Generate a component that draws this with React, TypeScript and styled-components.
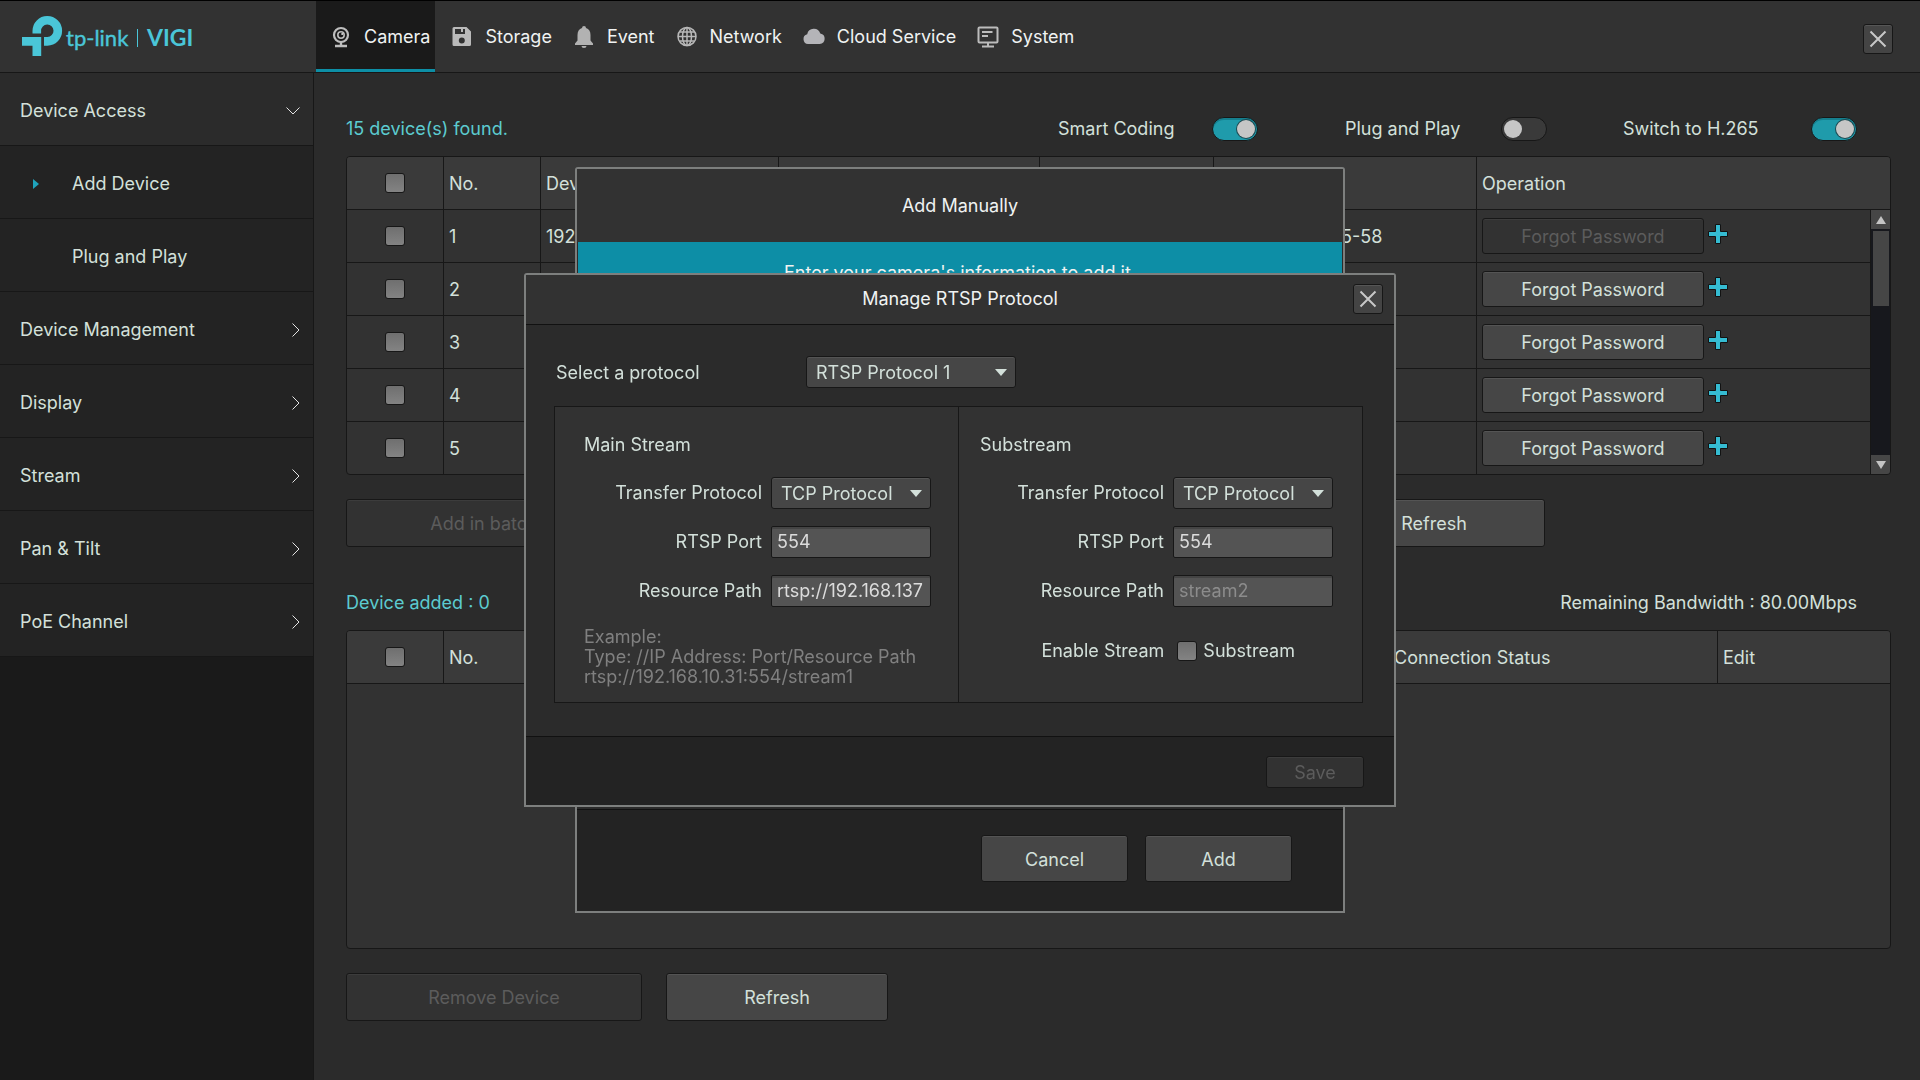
import React from "react";
import styled, { createGlobalStyle, css } from "styled-components";

const c = {
  line: "#171717",
  page: "#2b2b2b",
  panel: "#323232",
  head: "#3a3a3a",
  dark: "#232323",
  darker: "#1a1a1a",
  btn: "#464646",
  text: "#d3e0da",
  white: "#f0f3f2",
  teal: "#0d8fa6",
  tealText: "#5ccbd0",
};

const Global = createGlobalStyle`
  * { box-sizing: border-box; }
  body { margin: 0; background: ${c.page}; }
  body, button, input, select {
    font-family: Inter, "Liberation Sans", sans-serif;
    font-size: 18px;
    line-height: 20px;
    color: ${c.text};
  }
`;

const Page = styled.div`
  min-height: 100vh;
  display: flex;
  flex-direction: column;
  background: ${c.page};
`;

/* ---------- header ---------- */
const Header = styled.header`
  display: flex;
  align-items: stretch;
  height: 73px;
  background: ${c.panel};
  border-top: 1px solid #000;
  border-bottom: 1px solid ${c.line};
`;

const Brand = styled.div`
  flex: none;
  width: 316px;
  padding-left: 22px;
  padding-top: 14px;
`;

const Nav = styled.nav`
  display: flex;
  flex: 1;
  gap: 2px;
`;

const Tab = styled.a<{ $active?: boolean }>`
  display: flex;
  align-items: center;
  gap: 12px;
  height: 71px;
  padding: 3px 5px 0 14px;
  color: ${c.white};
  text-decoration: none;
  border-bottom: 3px solid transparent;
  ${(p) =>
    p.$active &&
    css`
      background: ${c.darker};
      border-bottom-color: ${c.teal};
    `}
`;

const CloseButton = styled.button`
  flex: none;
  display: grid;
  place-items: center;
  width: 30px;
  height: 30px;
  padding: 0;
  border: 1px solid ${c.line};
  border-radius: 3px;
  background: #444;
  box-shadow: inset 0 1px 0 #565656;
`;

const HeaderEnd = styled.div`
  display: flex;
  align-items: center;
  padding: 5px 27px 0 0;
`;

/* ---------- sidebar ---------- */
const Columns = styled.div`
  display: flex;
  flex: 1;
`;

const Sidebar = styled.aside`
  flex: none;
  width: 314px;
  background: ${c.darker};
  border-right: 1px solid ${c.line};
`;

const Menu = styled.ul`
  list-style: none;
  margin: 0;
  padding: 0;
`;

const MenuLink = styled.a<{ $open?: boolean; $sub?: boolean }>`
  display: flex;
  align-items: center;
  justify-content: space-between;
  height: 73px;
  padding: 3px 13px 0 ${(p) => (p.$sub ? 33 : 20)}px;
  ${(p) => p.$sub && "justify-content: flex-start; gap: 31px;"}
  color: ${c.text};
  text-decoration: none;
  background: ${(p) => (p.$open ? c.page : c.dark)};
  border-bottom: 1px solid ${c.line};
`;

const MarkerSlot = styled.span`
  display: flex;
  width: 8px;
`;

/* ---------- main area ---------- */
const Main = styled.main`
  flex: 1;
  min-width: 0;
  padding: 27px 29px 27px 32px;
`;

const StatusBar = styled.div`
  display: flex;
  align-items: center;
  justify-content: space-between;
  height: 56px;
  padding: 2px 34px 0 0;
`;

const Count = styled.span`
  color: ${c.tealText};
`;

const Toggles = styled.div`
  display: grid;
  grid-template-columns: 154px 133px 156px 122px 188px 46px;
  align-items: center;
`;

const Toggle = styled.input`
  appearance: none;
  margin: 0;
  width: 46px;
  height: 24px;
  padding: 2px;
  display: flex;
  border: 1px solid ${c.line};
  border-radius: 12px;
  background: #3a3a3a;
  &::before {
    content: "";
    width: 18px;
    height: 18px;
    border-radius: 50%;
    background: #c6c6c6;
  }
  &:checked {
    background: #1f9bab;
    box-shadow: inset 0 2px 0 #157f8e;
    justify-content: flex-end;
  }
  &:checked::before {
    box-shadow: 0 0 0 1px #1c4a52;
  }
`;

const Check = styled.input`
  appearance: none;
  flex: none;
  display: block;
  width: 20px;
  height: 20px;
  margin: 0;
  border: 1px solid ${c.line};
  border-radius: 3px;
  background: linear-gradient(#6f6f6f, #838383);
`;

const Frame = styled.div<{ $min?: number }>`
  position: relative;
  overflow: hidden;
  border: 1px solid ${c.line};
  border-radius: 4px;
  background: ${c.panel};
  min-height: ${(p) => p.$min ?? 0}px;
`;

const Table = styled.table`
  width: 100%;
  table-layout: fixed;
  border-collapse: separate;
  border-spacing: 0;
`;

const cell = css`
  height: 53px;
  padding: 2px 5px 0;
  text-align: left;
  font-weight: 400;
  white-space: nowrap;
  border-right: 1px solid ${c.line};
  border-bottom: 1px solid ${c.line};
  &:last-child {
    border-right: 0;
  }
`;

const Th = styled.th`
  ${cell}
  background: ${c.head};
`;

const Td = styled.td`
  ${cell}
  tr:last-child > & {
    height: 52px;
    border-bottom: 0;
  }
`;

const Centered = styled.div`
  display: flex;
  justify-content: center;
  padding-bottom: 2px;
`;

const Operation = styled.div`
  display: flex;
  align-items: center;
  gap: 4px;
  padding-bottom: 2px;
`;

const Button = styled.button<{ $w?: number; $h?: number }>`
  flex: none;
  width: ${(p) => (p.$w ? p.$w + "px" : "auto")};
  height: ${(p) => p.$h ?? 48}px;
  padding: 2px 0 0;
  border: 1px solid ${c.line};
  border-radius: 3px;
  background: ${c.btn};
  box-shadow: inset 0 1px 0 #545454;
  &:disabled {
    background: ${c.panel};
    color: #5c5c5c;
    box-shadow: inset 0 1px 0 #3c3c3c;
  }
`;

const IconButton = styled.button`
  display: flex;
  padding: 0 0 4px;
  border: 0;
  background: none;
`;

const ScrollBar = styled.div`
  position: absolute;
  top: 53px;
  right: 0;
  bottom: 0;
  width: 20px;
  display: flex;
  flex-direction: column;
  background: #17181d;
  border-left: 1px solid ${c.line};
`;

const ScrollArrow = styled.button`
  display: grid;
  place-items: center;
  height: 19px;
  padding: 0;
  border: 0;
  background: #464646;
`;

const ScrollThumb = styled.div`
  height: 75px;
  margin: 2px 1px auto 2px;
  background: #464646;
`;

const Actions = styled.div`
  display: grid;
  grid-template-columns: 296px 633px 222px;
  gap: 24px;
  padding-top: 24px;
  margin-bottom: 27px;
  & > :nth-child(2) {
    grid-column: 3;
  }
`;

const ActionRow = styled.div`
  display: flex;
  gap: 24px;
  padding-top: 24px;
`;

/* ---------- dialogs ---------- */
const Overlay = styled.div`
  position: fixed;
  inset: 0;
  display: flex;
  align-items: center;
  justify-content: center;
`;

const Dialog = styled.section<{ $w: number }>`
  width: ${(p) => p.$w}px;
  max-width: 100%;
  border: 2px solid #7d7f7e;
  border-radius: 3px 3px 0 0;
  background: ${c.page};
`;

const AddTitle = styled.h2`
  margin: 0;
  height: 73px;
  padding-top: 27px;
  text-align: center;
  font-size: 18px;
  font-weight: 400;
  color: ${c.white};
  background: ${c.panel};
`;

const Banner = styled.p`
  margin: 0 1px;
  padding: 21px 0;
  text-align: center;
  color: ${c.white};
  background: #0d8ea6;
`;

const AddBody = styled.div`
  min-height: 505px;
`;

const DialogFooter = styled.footer<{ $pad: string; $gap?: number }>`
  display: flex;
  justify-content: flex-end;
  gap: ${(p) => p.$gap ?? 0}px;
  padding: ${(p) => p.$pad};
  background: ${c.dark};
  border-top: 1px solid #111;
`;

const RtspHeader = styled.header`
  display: grid;
  grid-template-columns: 41px 1fr 41px;
  align-items: center;
  height: 50px;
  padding-bottom: 1px;
  background: ${c.panel};
  border-bottom: 1px solid #111;
  & > h2 {
    margin: 0;
    grid-column: 2;
    text-align: center;
    font-size: 18px;
    font-weight: 400;
    color: ${c.white};
  }
`;

const RtspBody = styled.div`
  padding: 31px 31px 33px 28px;
`;

const ProtocolRow = styled.div`
  display: grid;
  grid-template-columns: 252px 210px;
  align-items: center;
  margin-bottom: 18px;
  & > label {
    padding: 2px 0 0 2px;
  }
`;

const Streams = styled.div`
  display: grid;
  grid-template-columns: 404px 1fr;
  border: 1px solid ${c.line};
  background: ${c.panel};
`;

const Stream = styled.section<{ $pad: string; $divided?: boolean }>`
  padding: ${(p) => p.$pad};
  ${(p) => p.$divided && `border-right: 1px solid ${c.line};`}
  & > h3 {
    margin: 0 0 22px;
    font-size: 18px;
    font-weight: 400;
  }
`;

const Fields = styled.div`
  display: grid;
  grid-template-columns: 1fr 160px;
  column-gap: 9px;
  row-gap: 17px;
  align-items: center;
  & > label {
    text-align: right;
  }
`;

const TextInput = styled.input`
  width: 160px;
  height: 32px;
  padding: 0 0 1px 5px;
  color: #dcdcdc;
  border: 1px solid ${c.line};
  border-radius: 2px;
  background: #545454;
  box-shadow: inset 0 2px 0 #444;
  &::placeholder {
    color: #8c8c8c;
    opacity: 1;
  }
`;

const SelectBox = styled.div`
  display: grid;
  align-items: center;
  & > * {
    grid-area: 1 / 1;
  }
  & > svg {
    justify-self: end;
    margin-right: 9px;
    pointer-events: none;
  }
`;

const Select = styled.select`
  appearance: none;
  width: 100%;
  height: 32px;
  padding: 1px 0 0 9px;
  border: 1px solid ${c.line};
  border-radius: 3px;
  background: ${c.btn};
  box-shadow: inset 0 1px 0 #545454;
`;

const Example = styled.p`
  margin: 20px 0 0;
  color: #808080;
  white-space: nowrap;
`;

const EnableRow = styled.div`
  display: flex;
  align-items: center;
  justify-content: flex-end;
  margin-top: 34px;
  padding-right: 38px;
`;

const CheckLabel = styled.div`
  display: flex;
  align-items: center;
  gap: 6px;
  margin-left: 13px;
`;

/* ---------- drawings ---------- */
const Logo = () => (
  <svg width="180" height="46" viewBox="22 15 180 46" role="img" aria-label="tp-link VIGI">
    <g fill="#4ac6d8">
      <path d="M32.5 33.6V31A14.8 14.8 0 1 1 47.4 45.7H44V37h3.4A6.2 6.2 0 1 0 41.1 31v2.6Z" />
      <path d="M22 37h19.2v19H32.5V45.8H22Z" />
      <rect x="137" y="29" width="1" height="18" />
      <text x="66" y="46" fontFamily="Lato, sans-serif" fontSize="22" stroke="#4ac6d8" strokeWidth="0.4">tp-link</text>
      <text x="147" y="46" fontFamily="Lato, sans-serif" fontSize="23" fontWeight="700">VIGI</text>
    </g>
  </svg>
);

const Cross = () => (
  <svg width="18" height="18" viewBox="0 0 18 18" stroke="#c8c8c8" strokeWidth="2">
    <path d="M1.5 1.5l15 15M16.5 1.5l-15 15" />
  </svg>
);

const Caret = () => (
  <svg width="12" height="7" viewBox="0 0 12 7" fill={c.text}>
    <path d="M0 0h12L6 7z" />
  </svg>
);

const Plus = () => (
  <svg width="20" height="20" viewBox="0 0 20 20" fill="#35bcd2" stroke="#121212">
    <path d="M7.5 .5h5v7h7v5h-7v7h-5v-7h-7v-5h7z" />
  </svg>
);

const ChevronDown = () => (
  <svg width="14" height="8" viewBox="0 0 14 8" fill="none" stroke="#e4e4e4">
    <path d="M.5.5L7 7 13.5.5" />
  </svg>
);

const ChevronRight = () => (
  <svg width="8" height="14" viewBox="0 0 8 14" fill="none" stroke="#e4e4e4">
    <path d="M.5.5L7 7 .5 13.5" />
  </svg>
);

const icon = { width: 22, height: 22, viewBox: "0 0 22 22" };

const CameraIcon = () => (
  <svg {...icon} fill="none" stroke="#bdbdbd">
    <circle cx="11" cy="9" r="7" strokeWidth="2.2" />
    <circle cx="11" cy="9" r="3.2" strokeWidth="1.6" />
    <circle cx="12.2" cy="8" r="1" fill="#ddd" stroke="none" />
    <path d="M11 16v4M5 20h12" strokeWidth="2.4" />
  </svg>
);

const StorageIcon = () => (
  <svg {...icon} fill="#bababa">
    <path
      fillRule="evenodd"
      d="M3 1h12.500L20 5.500V18.500a1.500 1.500 0 0 1-1.500 1.500H3A1.500 1.500 0 0 1 1.500 18.500V2.500A1.500 1.500 0 0 1 3 1ZM4 3v5h10V3h-2v3h-2V3ZM10.800 11.500a3 3 0 1 0 0 6 3 3 0 0 0 0-6Z"
    />
  </svg>
);

const BellIcon = () => (
  <svg {...icon} fill="#b2b2b2">
    <path d="M11 0a2 2 0 0 1 2 2c3 1 4.500 3.500 4.500 7v5.500l2.500 3V19H2v-1.500l2.500-3V9c0-3.500 1.500-6 4.500-7a2 2 0 0 1 2-2ZM8.500 20h5a2.500 2 0 0 1-5 0Z" />
  </svg>
);

const GlobeIcon = () => (
  <svg {...icon} fill="none" stroke="#b8b8b8" strokeWidth="1.5">
    <circle cx="11" cy="10.5" r="9" />
    <ellipse cx="11" cy="10.5" rx="4.5" ry="9" />
    <path d="M11 1.5v18M2 10.5h18M3.500 6h15M3.500 15h15" />
  </svg>
);

const CloudIcon = () => (
  <svg {...icon} fill="#b4b4b8">
    <path d="M5 18a5 5 0 0 1-.8-9.800A6.800 6.800 0 0 1 17.300 7.500a5.300 5.300 0 0 1-.6 10.500Z" />
  </svg>
);

const SystemIcon = () => (
  <svg {...icon} fill="none" stroke="#bcbcbc" strokeWidth="2">
    <rect x="1.5" y="1.5" width="19" height="15" rx="1" />
    <path d="M5 6h10.500M5 10h6M11 16.500v3M5 20.500h12" />
  </svg>
);

const ArrowMark = () => (
  <svg width="6" height="10" viewBox="0 0 6 10" fill="#1fa3bb">
    <path d="M0 0l6 5-6 5z" />
  </svg>
);

/* ---------- data ---------- */
const tabs = [
  { name: "Camera", Icon: CameraIcon, active: true },
  { name: "Storage", Icon: StorageIcon },
  { name: "Event", Icon: BellIcon },
  { name: "Network", Icon: GlobeIcon },
  { name: "Cloud Service", Icon: CloudIcon },
  { name: "System", Icon: SystemIcon },
];

const menu = [
  { name: "Device Access", open: true },
  { name: "Add Device", sub: true, current: true },
  { name: "Plug and Play", sub: true },
  { name: "Device Management" },
  { name: "Display" },
  { name: "Stream" },
  { name: "Pan & Tilt" },
  { name: "PoE Channel" },
];

const toggles = [
  { id: "smart-coding", name: "Smart Coding", on: true },
  { id: "plug-and-play", name: "Plug and Play", on: false },
  { id: "h265", name: "Switch to H.265", on: true },
];

const devices = [
  { no: 1, ip: "192.168", mac: "00-16-31-12-65-58" },
  { no: 2, ip: "", mac: "" },
  { no: 3, ip: "", mac: "" },
  { no: 4, ip: "", mac: "" },
  { no: 5, ip: "", mac: "" },
];

function StreamFields({ id, path, placeholder }: { id: string; path?: string; placeholder?: string }) {
  return (
    <Fields>
      <label htmlFor={id + "-transfer"}>Transfer Protocol</label>
      <SelectBox>
        <Select id={id + "-transfer"}>
          <option>TCP Protocol</option>
        </Select>
        <Caret />
      </SelectBox>
      <label htmlFor={id + "-port"}>RTSP Port</label>
      <TextInput id={id + "-port"} defaultValue="554" />
      <label htmlFor={id + "-path"}>Resource Path</label>
      <TextInput id={id + "-path"} defaultValue={path} placeholder={placeholder} />
    </Fields>
  );
}

export default function App() {
  return (
    <>
      <Global />
      <Page>
        <Header>
          <Brand>
            <Logo />
          </Brand>
          <Nav>
            {tabs.map(({ name, Icon, active }) => (
              <Tab key={name} href="#" $active={active}>
                <Icon />
                {name}
              </Tab>
            ))}
          </Nav>
          <HeaderEnd>
            <CloseButton aria-label="Close">
              <Cross />
            </CloseButton>
          </HeaderEnd>
        </Header>

        <Columns>
          <Sidebar>
            <Menu>
              {menu.map((m) => (
                <li key={m.name}>
                  <MenuLink href="#" $open={m.open} $sub={m.sub}>
                    {m.sub && <MarkerSlot>{m.current && <ArrowMark />}</MarkerSlot>}
                    {m.name}
                    {!m.sub && (m.open ? <ChevronDown /> : <ChevronRight />)}
                  </MenuLink>
                </li>
              ))}
            </Menu>
          </Sidebar>

          <Main>
            <StatusBar>
              <Count>15 device(s) found.</Count>
              <Toggles>
                {toggles.map((t) => (
                  <React.Fragment key={t.id}>
                    <label htmlFor={t.id}>{t.name}</label>
                    <Toggle id={t.id} type="checkbox" role="switch" defaultChecked={t.on} />
                  </React.Fragment>
                ))}
              </Toggles>
            </StatusBar>
            <Frame>
              <Table>
                <colgroup>
                  <col width="97" />
                  <col width="97" />
                  <col width="238" />
                  <col width="261" />
                  <col width="174" />
                  <col width="263" />
                  <col />
                </colgroup>
                <thead>
                  <tr>
                    <Th>
                      <Centered>
                        <Check type="checkbox" aria-label="Select all found devices" />
                      </Centered>
                    </Th>
                    <Th>No.</Th>
                    <Th>Device</Th>
                    <Th />
                    <Th />
                    <Th />
                    <Th>Operation</Th>
                  </tr>
                </thead>
                <tbody>
                  {devices.map((d) => (
                    <tr key={d.no}>
                      <Td>
                        <Centered>
                          <Check type="checkbox" aria-label={"Select device " + d.no} />
                        </Centered>
                      </Td>
                      <Td>{d.no}</Td>
                      <Td>{d.ip}</Td>
                      <Td />
                      <Td />
                      <Td>{d.mac}</Td>
                      <Td>
                        <Operation>
                          <Button $w={222} $h={36} disabled={d.no === 1}>
                            Forgot Password
                          </Button>
                          <IconButton aria-label={"Add device " + d.no}>
                            <Plus />
                          </IconButton>
                        </Operation>
                      </Td>
                    </tr>
                  ))}
                </tbody>
              </Table>
              <ScrollBar>
                <ScrollArrow aria-label="Scroll up">
                  <svg width="10" height="8" viewBox="0 0 10 8" fill="#c4c4c4">
                    <path d="M5 0l5 8H0z" />
                  </svg>
                </ScrollArrow>
                <ScrollThumb />
                <ScrollArrow aria-label="Scroll down">
                  <svg width="10" height="8" viewBox="0 0 10 8" fill="#c4c4c4">
                    <path d="M0 0h10L5 8z" />
                  </svg>
                </ScrollArrow>
              </ScrollBar>
            </Frame>
            <Actions>
              <Button disabled>Add in batches</Button>
              <Button>Refresh</Button>
            </Actions>

            <StatusBar>
              <Count>Device added : 0</Count>
              <span>Remaining Bandwidth : 80.00Mbps</span>
            </StatusBar>
            <Frame $min={319}>
              <Table>
                <colgroup>
                  <col width="97" />
                  <col width="97" />
                  <col width="848" />
                  <col width="329" />
                  <col />
                </colgroup>
                <thead>
                  <tr>
                    <Th>
                      <Centered>
                        <Check type="checkbox" aria-label="Select all added devices" />
                      </Centered>
                    </Th>
                    <Th>No.</Th>
                    <Th />
                    <Th>Connection Status</Th>
                    <Th>Edit</Th>
                  </tr>
                </thead>
              </Table>
            </Frame>
            <ActionRow>
              <Button $w={296} disabled>
                Remove Device
              </Button>
              <Button $w={222}>Refresh</Button>
            </ActionRow>
          </Main>
        </Columns>
      </Page>

      <Overlay>
        <Dialog $w={770} role="dialog" aria-labelledby="add-title">
          <AddTitle id="add-title">Add Manually</AddTitle>
          <Banner>Enter your camera's information to add it.</Banner>
          <AddBody />
          <DialogFooter $pad="25px 51px 29px" $gap={17}>
            <Button $w={147} $h={47}>
              Cancel
            </Button>
            <Button $w={147} $h={47}>
              Add
            </Button>
          </DialogFooter>
        </Dialog>
      </Overlay>

      <Overlay>
        <Dialog $w={872} role="dialog" aria-labelledby="rtsp-title">
          <RtspHeader>
            <h2 id="rtsp-title">Manage RTSP Protocol</h2>
            <CloseButton aria-label="Close dialog">
              <Cross />
            </CloseButton>
          </RtspHeader>
          <RtspBody>
            <ProtocolRow>
              <label htmlFor="protocol">Select a protocol</label>
              <SelectBox>
                <Select id="protocol">
                  <option>RTSP Protocol 1</option>
                </Select>
                <Caret />
              </SelectBox>
            </ProtocolRow>
            <Streams>
              <Stream $divided $pad="28px 27px 15px 29px">
                <h3>Main Stream</h3>
                <StreamFields id="main" path="rtsp://192.168.137" />
                <Example>
                  Example:
                  <br />
                  Type: //IP Address: Port/Resource Path
                  <br />
                  rtsp://192.168.10.31:554/stream1
                </Example>
              </Stream>
              <Stream $pad="28px 29px 15px 21px">
                <h3>Substream</h3>
                <StreamFields id="sub" placeholder="stream2" />
                <EnableRow>
                  <span>Enable Stream</span>
                  <CheckLabel>
                    <Check id="enable-sub" type="checkbox" />
                    <label htmlFor="enable-sub">Substream</label>
                  </CheckLabel>
                </EnableRow>
              </Stream>
            </Streams>
          </RtspBody>
          <DialogFooter $pad="19px 30px 17px">
            <Button $w={98} $h={32} disabled>
              Save
            </Button>
          </DialogFooter>
        </Dialog>
      </Overlay>
    </>
  );
}
